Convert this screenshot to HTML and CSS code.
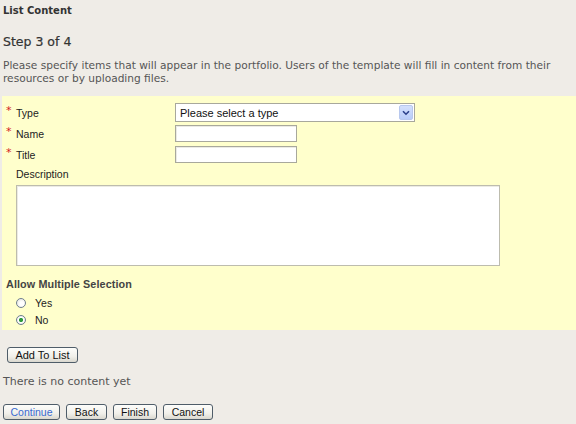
FILE: index.html
```html
<!DOCTYPE html>
<html>
<head>
<meta charset="utf-8">
<link rel="stylesheet" href="styles.css">
</head>
<body>
<div class="page">
  <h1 class="section-title">List Content</h1>
  <h2 class="step">Step 3 of 4</h2>
  <p class="intro">Please specify items that will appear in the portfolio. Users of the template will fill in content from their resources or by uploading files.</p>

  <form class="panel">
    <div class="row">
      <span class="req">*</span>
      <label class="label">Type</label>
      <div class="select">
        <span class="select-text">Please select a type</span>
        <span class="select-btn">
          <svg width="8" height="6" viewBox="0 0 8 6"><path d="M1 1.2 L4 4.2 L7 1.2" fill="none" stroke="#2a3f8a" stroke-width="1.6"/></svg>
        </span>
      </div>
    </div>
    <div class="row">
      <span class="req">*</span>
      <label class="label">Name</label>
      <input class="text-input" type="text">
    </div>
    <div class="row">
      <span class="req">*</span>
      <label class="label">Title</label>
      <input class="text-input" type="text">
    </div>
    <div class="desc-label">Description</div>
    <textarea class="desc"></textarea>

    <div class="multi-label">Allow Multiple Selection</div>
    <label class="radio-row"><input class="radio" type="radio" name="multi"><span>Yes</span></label>
    <label class="radio-row"><input class="radio" type="radio" name="multi" checked><span>No</span></label>
  </form>

  <button class="btn add-btn" type="button">Add To List</button>

  <p class="empty">There is no content yet</p>

  <div class="actions">
    <button class="btn btn-primary" type="button">Continue</button>
    <button class="btn" type="button">Back</button>
    <button class="btn" type="button">Finish</button>
    <button class="btn" type="button">Cancel</button>
  </div>
</div>
</body>
</html>
```

FILE: styles.css
```css
html, body {
  margin: 0;
  padding: 0;
}

body {
  background: #efece7;
  font-family: "DejaVu Sans", Verdana, sans-serif;
  color: #333;
}

.page {
  padding: 0 0 0 3px;
}

.section-title {
  margin: 0;
  padding-top: 4px;
  font-size: 10px;
  line-height: 13px;
  font-weight: bold;
  color: #333;
}

.step {
  margin: 17px 0 0 0;
  font-size: 12.5px;
  line-height: 15px;
  font-weight: normal;
  color: #333;
  -webkit-text-stroke: 0.2px #333;
}

.intro {
  margin: 10px 0 0 0;
  font-size: 10.6px;
  line-height: 12.5px;
  color: #555;
  padding-right: 10px;
}

.panel {
  margin: 12px 0 0 -1px;
  padding: 6px 0 2px 4px;
  background: #ffffcc;
  font-family: "Liberation Sans", Arial, sans-serif;
  font-size: 10.5px;
  color: #222;
}

.row {
  display: flex;
  align-items: center;
  height: 21px;
}

.req {
  width: 10px;
  align-self: flex-start;
  margin-top: 3px;
  color: #d42020;
  font-family: "DejaVu Sans", sans-serif;
  font-size: 11px;
  line-height: 11px;
}

.label {
  width: 159px;
  line-height: 13px;
  padding-top: 2px;
}

.select {
  position: relative;
  box-sizing: border-box;
  width: 240px;
  height: 19px;
  background: #fff;
  border: 1px solid #a8a89c;
  display: flex;
  align-items: center;
  font-size: 11px;
  color: #111;
}

.select-text {
  padding-left: 4px;
}

.select-btn {
  position: absolute;
  right: 1px;
  top: 1px;
  width: 14px;
  height: 15px;
  box-sizing: border-box;
  background: linear-gradient(#d4e0fd, #b9cdf8);
  border: 1px solid #b8c8ee;
  border-radius: 2px;
  display: flex;
  align-items: center;
  justify-content: center;
}

.text-input {
  box-sizing: border-box;
  width: 122px;
  height: 17px;
  margin: 0;
  padding: 0 2px;
  background: #fff;
  border: 1px solid #a8a89c;
  box-shadow: inset 1px 1px 0 #ecebe4;
  font-family: inherit;
  font-size: 11px;
}

.desc-label {
  margin: 3px 0 0 10px;
  line-height: 13px;
}

.desc {
  display: block;
  box-sizing: border-box;
  width: 484px;
  height: 81px;
  margin: 4px 0 0 10px;
  padding: 2px;
  background: #fff;
  border: 1px solid #bdbcae;
  box-shadow: inset 1px 1px 0 #ecebe4;
  resize: none;
  font-family: inherit;
}

.multi-label {
  margin: 12px 0 0 0;
  font-weight: bold;
  font-size: 10.8px;
  line-height: 13px;
  color: #444;
  letter-spacing: 0.1px;
}

.radio-row {
  display: flex;
  align-items: center;
  height: 17px;
  padding-left: 10px;
  margin-top: 0;
}

.multi-label + .radio-row {
  margin-top: 3px;
}

.radio {
  appearance: none;
  -webkit-appearance: none;
  box-sizing: border-box;
  width: 10px;
  height: 10px;
  margin: 0 9px 0 0;
  border: 1px solid #6f7f8e;
  border-radius: 50%;
  background: radial-gradient(circle at 60% 60%, #ffffff 30%, #dcdcd6 100%);
  position: relative;
}

.radio:checked {
  background: radial-gradient(circle, #2e9a3a 0 1.8px, #ffffff 2.4px 45%, #dcdcd6 100%);
}

.btn {
  box-sizing: border-box;
  height: 16px;
  margin: 0;
  padding: 0 6px;
  border: 1px solid #4f5d69;
  border-radius: 3px;
  background: linear-gradient(#fdfdfb, #f1f0ea 60%, #dad8cf);
  font-family: "Liberation Sans", Arial, sans-serif;
  font-size: 10.5px;
  line-height: 14px;
  color: #111;
}

.add-btn {
  display: block;
  width: 71px;
  margin: 17px 0 0 4px;
  font-size: 11px;
}

.empty {
  margin: 12px 0 0 0;
  font-size: 11px;
  line-height: 13px;
  color: #555;
}

.actions {
  display: flex;
  gap: 6px;
  margin-top: 16px;
}

.actions .btn:nth-child(1) { width: 57px; }
.actions .btn:nth-child(2) { width: 41px; }
.actions .btn:nth-child(3) { width: 44px; }
.actions .btn:nth-child(4) { width: 50px; }

.btn-primary {
  color: #3a6ad0;
}
```
